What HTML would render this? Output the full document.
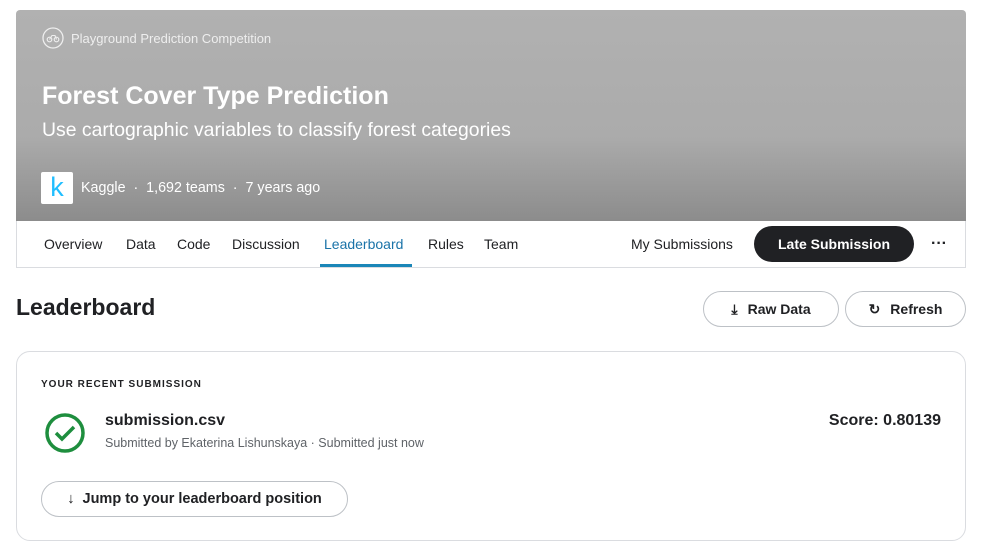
<!DOCTYPE html>
<html><head><style>
*{box-sizing:border-box;margin:0;padding:0}
body{width:994px;height:556px;background:#fff;font-family:"Liberation Sans",sans-serif;color:#202124;position:relative;overflow:hidden}
.hdr{position:absolute;left:16px;top:10px;width:950px;height:211px;background:linear-gradient(#b1b1b1 0,#ababab 60%,#8c8c8c 100%);border-radius:4px 4px 0 0}
.nav{position:absolute;left:16px;top:221px;width:950px;height:47px;border:1px solid #dadce0;border-top:none}
.t{position:absolute;white-space:nowrap}
.btn{position:absolute;border:1px solid #bdc1c6;border-radius:20px;font-weight:bold;font-size:14px;display:flex;align-items:center;justify-content:center;gap:10px}
</style></head><body>
<div class="hdr">
 <svg style="position:absolute;left:26px;top:17px" width="22" height="22" viewBox="0 0 22 22"><circle cx="11" cy="11" r="10" fill="none" stroke="#eee" stroke-width="1.3"/><circle cx="7.5" cy="12.5" r="2.3" fill="none" stroke="#eee" stroke-width="1.2"/><circle cx="14.5" cy="12.5" r="2.3" fill="none" stroke="#eee" stroke-width="1.2"/><path d="M7.5 12.5 L10 8.5 H13 L14.5 12.5" fill="none" stroke="#eee" stroke-width="1.1"/></svg>
 <div class="t" style="left:55px;top:21px;font-size:13px;color:#eee">Playground Prediction Competition</div>
 <div class="t" style="left:26px;top:72px;font-size:25px;font-weight:bold;color:#fff">Forest Cover Type Prediction</div>
 <div class="t" style="left:26px;top:109px;font-size:19.4px;color:#fff">Use cartographic variables to classify forest categories</div>
 <div style="position:absolute;left:25px;top:162px;width:32px;height:32px;background:#fff;border-radius:2px;color:#20beff;font-size:27px;text-align:center;line-height:31px">k</div>
 <div class="t" style="left:65px;top:170px;font-size:14.3px;color:#fff">Kaggle &nbsp;·&nbsp; 1,692 teams &nbsp;·&nbsp; 7 years ago</div>
</div>
<div class="nav">
 <div class="t" style="left:27px;top:15px;font-size:14px">Overview</div>
 <div class="t" style="left:109px;top:15px;font-size:14px">Data</div>
 <div class="t" style="left:160px;top:15px;font-size:14px">Code</div>
 <div class="t" style="left:215px;top:15px;font-size:14px">Discussion</div>
 <div class="t" style="left:307px;top:15px;font-size:14px;color:#1a73a8">Leaderboard</div>
 <div style="position:absolute;left:303px;top:43px;width:92px;height:3px;background:#1a86b8"></div>
 <div class="t" style="left:411px;top:15px;font-size:14px">Rules</div>
 <div class="t" style="left:467px;top:15px;font-size:14px">Team</div>
 <div class="t" style="left:614px;top:15px;font-size:14px">My Submissions</div>
 <div style="position:absolute;left:737px;top:5px;width:160px;height:36px;background:#202124;border-radius:18px;color:#fff;font-weight:bold;font-size:14px;text-align:center;line-height:36px">Late Submission</div>
 <div class="t" style="left:914px;top:14px;font-size:16px;font-weight:bold">···</div>
</div>
<div class="t" style="left:16px;top:294px;font-size:23px;font-weight:bold">Leaderboard</div>
<div class="btn" style="left:703px;top:291px;width:136px;height:36px"><span style="font-size:14px">⤓</span>Raw Data</div>
<div class="btn" style="left:845px;top:291px;width:121px;height:36px"><span>↻</span>Refresh</div>
<div style="position:absolute;left:16px;top:351px;width:950px;height:190px;border:1px solid #dadce0;border-radius:14px">
 <div class="t" style="left:24px;top:27px;font-size:10px;font-weight:bold;letter-spacing:1px">YOUR RECENT SUBMISSION</div>
 <svg style="position:absolute;left:27px;top:60px" width="42" height="42" viewBox="0 0 42 42"><circle cx="21" cy="21" r="18" fill="none" stroke="#1e8e3e" stroke-width="3.5"/><path d="M12 21 L18 27 L30 15" fill="none" stroke="#1e8e3e" stroke-width="3.5"/></svg>
 <div class="t" style="left:88px;top:60px;font-size:16px;font-weight:bold">submission.csv</div>
 <div class="t" style="left:88px;top:84px;font-size:12.5px;color:#5f6368">Submitted by Ekaterina Lishunskaya · Submitted just now</div>
 <div class="t" style="right:24px;top:60px;font-size:16px;font-weight:bold">Score: 0.80139</div>
 <div class="btn" style="left:24px;top:129px;width:307px;height:36px;border-radius:18px;font-size:14.5px">↓ &nbsp;Jump to your leaderboard position</div>
</div>
</body></html>
